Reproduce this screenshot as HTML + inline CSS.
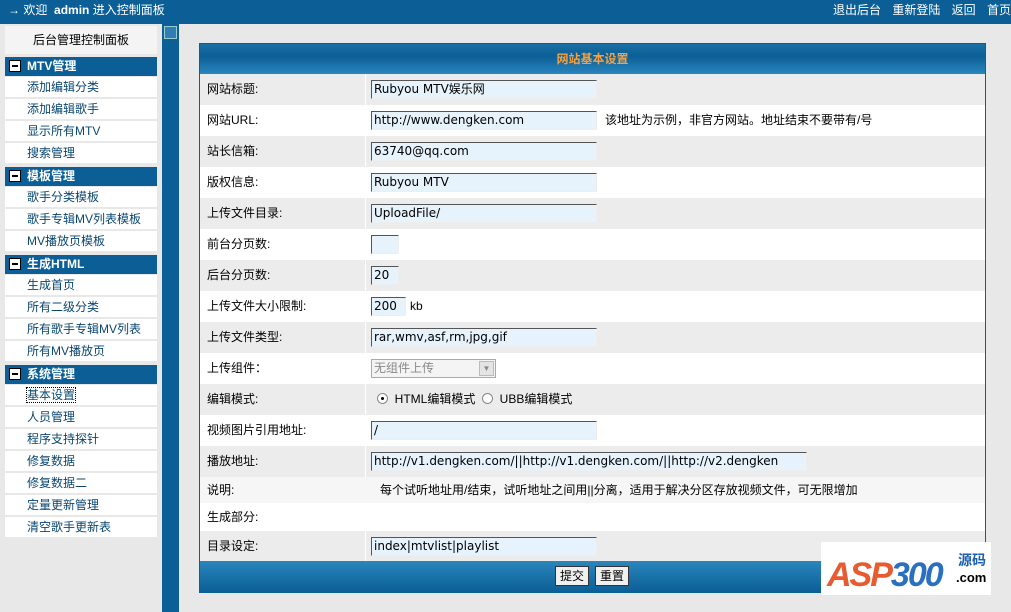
<!DOCTYPE html>
<html><head><meta charset="utf-8"><style>
*{margin:0;padding:0;box-sizing:border-box}
body{width:1011px;height:612px;overflow:hidden;background:#e8e8e8;font-family:"Liberation Sans","Noto Sans CJK SC",sans-serif;font-size:12px;color:#000;position:relative}
.top{position:absolute;left:0;top:0;width:1011px;height:24px;background:#0b5f96;color:#fff;font-size:12px;line-height:20px}
.top .l{position:absolute;left:8px}
.top .r{position:absolute;right:0;word-spacing:8px}
.side{position:absolute;left:0;top:24px;width:162px;height:588px;background:#e8e8e8}
.sh{position:absolute;left:5px;width:152px;height:28px;background:#f4f4f4;text-align:center;line-height:28px;font-size:12px}
.sec{position:absolute;left:5px;width:152px;height:19px;background:#0b5f96;color:#fff;font-weight:bold;line-height:19px;padding-left:22px}
.sec i{position:absolute;left:4px;top:3px;width:12px;height:12px;background:#fff;border:1px solid #000}
.sec i:after{content:"";position:absolute;left:2px;top:4px;width:6px;height:2px;background:#000}
.it{position:absolute;left:5px;width:152px;height:20px;background:#fff;color:#0a4670;line-height:20px;padding-left:22px}
.scroll{position:absolute;left:162px;top:24px;width:17px;height:588px;background:#0b5f96}
.scroll b{position:absolute;left:2px;top:2px;width:13px;height:13px;background:#2f7fb5;border:1px solid #9cc}
.tbl{position:absolute;left:199px;top:43px;width:787px;height:550px;border:1px solid #0b5f96;background:#fff}
.hd{position:absolute;left:0;top:0;width:785px;height:30px;background:linear-gradient(#1a6fa5,#0b5f96 40%,#2a86bd);color:#f8a040;font-weight:bold;text-align:center;line-height:30px}
.row{position:absolute;left:0;width:785px;line-height:31px;height:31px}
.g{background:#ececec}
.row .lb{position:absolute;left:7px}
.row .sep{position:absolute;left:165px;top:0;bottom:0;width:1px;background:#fff}
.in{position:absolute;left:171px;top:6px;height:19px;background:#e6f2fc;border-top:1px solid #555;border-left:1px solid #555;border-bottom:1px solid #eee;border-right:1px solid #eee;line-height:17px;padding-left:2px;font-family:"DejaVu Sans","Noto Sans CJK SC",sans-serif;font-size:12px;white-space:nowrap;overflow:hidden}
.ft{position:absolute;left:0;bottom:0;width:785px;height:31px;background:linear-gradient(#2a86bd,#0b5f96)}
.btn{position:absolute;top:5px;height:20px;background:#f0f0f0;border:1px solid #333;line-height:18px;padding:0 4px}
.rad{display:inline-block;width:11px;height:11px;border-radius:50%;border:1px solid #888;background:#fff;vertical-align:-1px;position:relative}
.rad.on:after{content:"";position:absolute;left:3px;top:3px;width:3px;height:3px;border-radius:50%;background:#000}
</style></head><body>
<div class="top"><span class="l">→ 欢迎 &nbsp;<b>admin</b> 进入控制面板</span><span class="r">退出后台 重新登陆 返回 首页</span></div>
<div class="side">
<div class="sh" style="top:2px">后台管理控制面板</div>
<div class="sec" style="top:33px"><i></i>MTV管理</div>
<div class="it" style="top:53px">添加编辑分类</div>
<div class="it" style="top:75px">添加编辑歌手</div>
<div class="it" style="top:97px">显示所有MTV</div>
<div class="it" style="top:119px">搜索管理</div>
<div class="sec" style="top:143px"><i></i>模板管理</div>
<div class="it" style="top:163px">歌手分类模板</div>
<div class="it" style="top:185px">歌手专辑MV列表模板</div>
<div class="it" style="top:207px">MV播放页模板</div>
<div class="sec" style="top:231px"><i></i>生成HTML</div>
<div class="it" style="top:251px">生成首页</div>
<div class="it" style="top:273px">所有二级分类</div>
<div class="it" style="top:295px">所有歌手专辑MV列表</div>
<div class="it" style="top:317px">所有MV播放页</div>
<div class="sec" style="top:341px"><i></i>系统管理</div>
<div class="it" style="top:361px"><span style="outline:1px dotted #000">基本设置</span></div>
<div class="it" style="top:383px">人员管理</div>
<div class="it" style="top:405px">程序支持探针</div>
<div class="it" style="top:427px">修复数据</div>
<div class="it" style="top:449px">修复数据二</div>
<div class="it" style="top:471px">定量更新管理</div>
<div class="it" style="top:493px">清空歌手更新表</div>
</div>
<div class="scroll"><b></b></div>
<div class="tbl">
<div class="hd">网站基本设置</div>
<div class="row g" style="top:30px"><span class="lb">网站标题:</span><span class="sep"></span><div class="in" style="width:226px">Rubyou MTV娱乐网</div></div>
<div class="row" style="top:61px"><span class="lb">网站URL:</span><div class="in" style="width:226px">http://www.dengken.com</div><span style="position:absolute;left:405px">该地址为示例，非官方网站。地址结束不要带有/号</span></div>
<div class="row g" style="top:92px"><span class="lb">站长信箱:</span><span class="sep"></span><div class="in" style="width:226px">63740@qq.com</div></div>
<div class="row" style="top:123px"><span class="lb">版权信息:</span><div class="in" style="width:226px">Rubyou MTV</div></div>
<div class="row g" style="top:154px"><span class="lb">上传文件目录:</span><span class="sep"></span><div class="in" style="width:226px">UploadFile/</div></div>
<div class="row" style="top:185px"><span class="lb">前台分页数:</span><div class="in" style="width:28px"></div></div>
<div class="row g" style="top:216px"><span class="lb">后台分页数:</span><span class="sep"></span><div class="in" style="width:28px">20</div></div>
<div class="row" style="top:247px"><span class="lb">上传文件大小限制:</span><div class="in" style="width:35px">200</div><span style="position:absolute;left:210px">kb</span></div>
<div class="row g" style="top:278px"><span class="lb">上传文件类型:</span><span class="sep"></span><div class="in" style="width:226px">rar,wmv,asf,rm,jpg,gif</div></div>
<div class="row" style="top:309px"><span class="lb">上传组件：</span><div style="position:absolute;left:171px;top:6px;width:125px;height:19px;border:1px solid #aaa;background:#f4f4f4;color:#888;line-height:17px;padding-left:2px">无组件上传<span style="position:absolute;right:1px;top:1px;width:15px;height:15px;background:#e4e4e4;border:1px solid #bbb;font-size:8px;line-height:14px;text-align:center">▼</span></div></div>
<div class="row g" style="top:340px"><span class="lb">编辑模式:</span><span class="sep"></span><span style="position:absolute;left:177px"><span class="rad on"></span>&nbsp; HTML编辑模式 &nbsp;<span class="rad"></span>&nbsp; UBB编辑模式</span></div>
<div class="row" style="top:371px"><span class="lb">视频图片引用地址:</span><div class="in" style="width:226px">/</div></div>
<div class="row g" style="top:402px"><span class="lb">播放地址:</span><span class="sep"></span><div class="in" style="width:436px">http://v1.dengken.com/||http://v1.dengken.com/||http://v2.dengken</div></div>
<div class="row" style="top:433px;height:26px;line-height:26px;background:#f6f6f6"><span class="lb">说明:</span><span style="position:absolute;left:180px">每个试听地址用/结束，试听地址之间用||分离，适用于解决分区存放视频文件，可无限增加</span></div>
<div class="row" style="top:459px;height:28px;line-height:28px"><span class="lb">生成部分:</span></div>
<div class="row g" style="top:487px"><span class="lb">目录设定:</span><span class="sep"></span><div class="in" style="width:226px">index|mtvlist|playlist</div></div>
<div class="ft"><span class="btn" style="left:355px">提交</span><span class="btn" style="left:395px">重置</span></div>
</div>
<div style="position:absolute;left:821px;top:542px;width:170px;height:53px;background:#fff">
<span style="position:absolute;left:6px;top:14px;font:italic bold 34px 'Liberation Sans',sans-serif;color:#e85a30;letter-spacing:-2px">ASP<span style="color:#2a6fc0">300</span></span>
<span style="position:absolute;left:137px;top:8px;font-weight:bold;font-size:14px;color:#1a5fb0;font-family:'Noto Sans CJK SC',sans-serif">源码</span>
<span style="position:absolute;left:135px;top:28px;font-weight:bold;font-size:13px;color:#000">.com</span>
</div>
</body></html>
